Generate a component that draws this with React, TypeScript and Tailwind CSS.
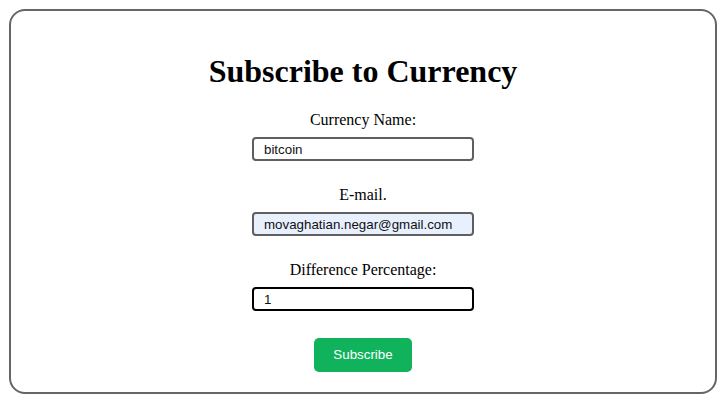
import React from "react";

const fields = [
  { label: "Currency Name:", value: "bitcoin", box: "border-[#5f5f5f] bg-white" },
  { label: "E-mail.", value: "movaghatian.negar@gmail.com", box: "border-[#5f5f5f] bg-[#e8f0fe]" },
  { label: "Difference Percentage:", value: "1", box: "border-black bg-white" },
];

const App = () => {
  return (
    <div className="w-[727px] h-[403px] bg-white pt-[9px] pl-[9px]">
      <div className="w-[708px] h-[385px] border-2 border-[#666] rounded-[16px] flex flex-col items-center font-['Liberation_Serif',serif] text-black">
        <h1 className="mt-[42px] text-[32px] leading-[37px] font-bold">
          Subscribe to Currency
        </h1>
        {fields.map((f, i) => (
          <div key={f.label} className="flex flex-col items-center">
            <label
              className={`text-[16px] leading-[18px] ${i === 0 ? "mt-[21px]" : "mt-[25px]"}`}
            >
              {f.label}
            </label>
            <input
              readOnly
              value={f.value}
              className={`mt-[8px] w-[222px] h-[24px] border-2 rounded-[4px] px-[10px] text-[13.33px] font-['Liberation_Sans',Arial,sans-serif] text-[#111] outline-none ${f.box}`}
            />
          </div>
        ))}
        <button className="mt-[27px] w-[98px] h-[34px] rounded-[5px] bg-[#10b35b] text-white text-[13.33px] font-['Liberation_Sans',Arial,sans-serif]">
          Subscribe
        </button>
      </div>
    </div>
  );
};

export default App;
